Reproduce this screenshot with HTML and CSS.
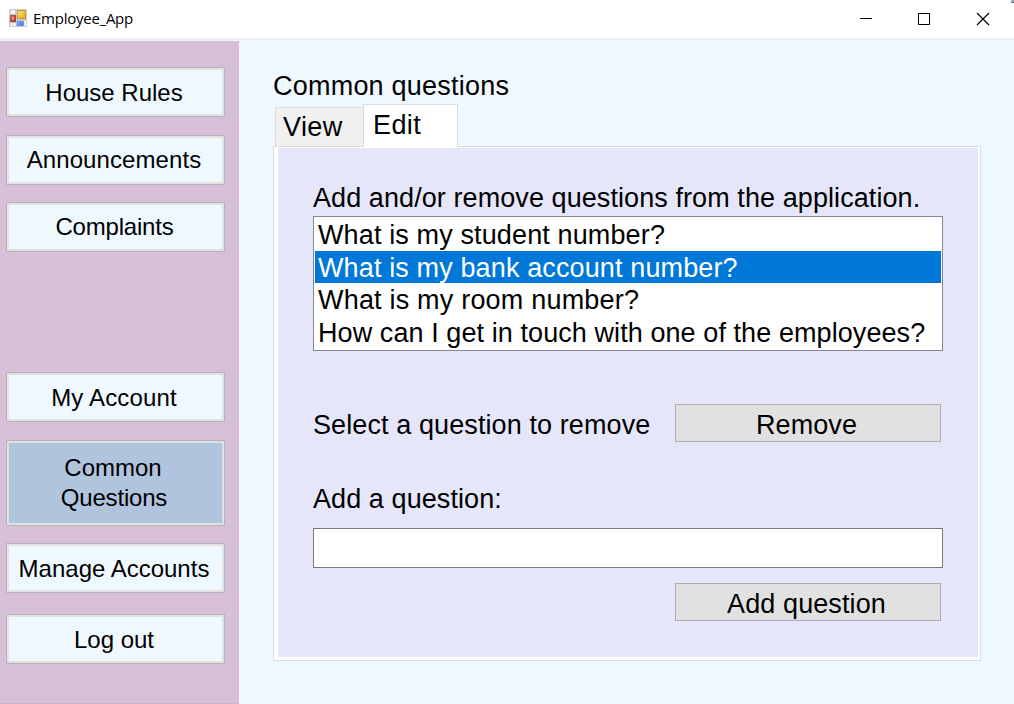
FILE: index.html
```html
<!DOCTYPE html>
<html lang="en">
<head>
<meta charset="utf-8">
<title>Employee_App</title>
<link rel="stylesheet" href="styles.css">
</head>
<body>
<div class="window">
  <header class="titlebar">
    <svg class="app-icon" width="18" height="18" viewBox="0 0 18 18">
      <defs>
        <linearGradient id="gold" x1="0" y1="0" x2="1" y2="1"><stop offset="0" stop-color="#ffe680"/><stop offset="1" stop-color="#e5a800"/></linearGradient>
        <linearGradient id="red" x1="0" y1="0" x2="1" y2="1"><stop offset="0" stop-color="#e08070"/><stop offset="1" stop-color="#b02018"/></linearGradient>
        <linearGradient id="blue" x1="0" y1="0" x2="1" y2="1"><stop offset="0" stop-color="#86b4f8"/><stop offset="1" stop-color="#3f78dc"/></linearGradient>
      </defs>
      <rect width="18" height="18" rx="1" fill="#cfcfcf"/>
      <path d="M2 1.500h4v3H2zM2 14h1.500v3H2zM4.500 14h2v3h-2zM15.500 12h1.500v5h-1.500z" fill="#fff"/>
      <rect x="1.300" y="6.300" width="5.400" height="6.400" fill="url(#red)" stroke="#a8342a" stroke-width=".7"/>
      <rect x="3" y="8" width="2" height="3" fill="#e6968a"/>
      <rect x="8.400" y="1.400" width="8.200" height="8.200" fill="url(#gold)" stroke="#b98a20" stroke-width=".8"/>
      <rect x="8" y="12" width="6.500" height="4.800" fill="url(#blue)" stroke="#5a87d8" stroke-width=".5"/>
    </svg>
    <span class="title">Employee_App</span>
    <svg class="controls" width="132" height="14" viewBox="0 0 132 14" fill="none" stroke="#000">
      <path d="M0 6.500h12"/>
      <path d="M58.500 1.500h11v11h-11z"/>
      <path d="M117 1l12 12M129 1l-12 12" stroke-width="1.150"/>
    </svg>
    <span class="edge"></span>
  </header>
  <div class="body">
    <nav class="sidebar">
      <button class="nav">House Rules</button>
      <button class="nav announcements">Announcements</button>
      <button class="nav complaints">Complaints</button>
      <button class="nav account">My Account</button>
      <button class="nav current">Common<br><span class="second">Questions</span></button>
      <button class="nav manage">Manage Accounts</button>
      <button class="nav logout">Log out</button>
    </nav>
    <main class="content">
      <h1 class="heading">Common questions</h1>
      <div class="tabs">
        <div class="tab">View</div>
        <div class="tab selected">Edit</div>
      </div>
      <section class="page">
        <p class="label intro">Add and/or remove questions from the application.</p>
        <ul class="list">
          <li class="item q1">What is my student number?</li>
          <li class="item q2 active">What is my bank account number?</li>
          <li class="item q3">What is my room number?</li>
          <li class="item q4">How can I get in touch with one of the employees?</li>
        </ul>
        <div class="row">
          <span class="label remove-label">Select a question to remove</span>
          <button class="action remove">Remove</button>
        </div>
        <label class="label add-label" for="question">Add a question:</label>
        <input class="field" id="question" type="text">
        <button class="action add">Add question</button>
      </section>
    </main>
  </div>
</div>
</body>
</html>
```
FILE: styles.css
```css
* { box-sizing: border-box; }
body { margin: 0; font-family: "Liberation Sans", Arial, sans-serif; color: #000; }
button { font-family: inherit; color: inherit; border-radius: 0; padding: 0; }
.window { width: 1014px; height: 704px; display: flex; flex-direction: column; background: #f0f8ff; overflow: hidden; }
.titlebar { height: 40px; flex: none; display: flex; align-items: flex-start; background: #fff; border-bottom: 2px solid #f0f0f0; padding-left: 9px; }
.app-icon { margin-top: 9px; }
.title { font: 15px/20px "Open Sans", "Noto Sans", sans-serif; margin: 8px 0 0 6px; letter-spacing: -0.25px; }
.controls { margin: 12px 0 0 auto; }
.edge { width: 3px; height: 3px; margin-left: 19px; background: #a4a9ba; border-bottom: 1px solid #62687e; }
.body { display: flex; flex: 1; min-height: 0; padding-top: 1px; }
.sidebar { width: 239px; background: #d8bfd8; padding: 26px 14px 0 6px; display: flex; flex-direction: column; border-bottom: 1px solid #cbb4cf; }
.nav { height: 50px; flex: none; background: #f0f8ff; border: 1px solid #b5b3b5; box-shadow: inset 0 0 0 2px #e1e1e1; font-size: 24px; line-height: 30px; margin: 0 0 17.5px; padding: 1px 3px 0 0; }
.announcements, .complaints { padding-top: 0; }
.announcements { letter-spacing: .08px; }
.complaints { margin-bottom: 120px; padding-right: 2px; letter-spacing: -.2px; }
.account { letter-spacing: .15px; }
.current { height: 86px; background: #b0c4de; padding: 0 5px 0 0; }
.second { letter-spacing: -.2px; padding-left: 2px; }
.manage { margin-bottom: 21px; }
.content { padding: 30px 33px 0 34px; flex: 1; display: flex; flex-direction: column; }
.heading { font-size: 27px; line-height: 30px; font-weight: 400; margin: 0; letter-spacing: .22px; }
.tabs { display: flex; align-items: flex-end; height: 43px; padding-left: 2px; margin-top: 3px; position: relative; z-index: 1; }
.tab { font-size: 27px; line-height: 30px; letter-spacing: .4px; width: 88px; height: 40px; background: #f0f0f0; border: 1px solid #dcdcdc; border-right: 0; padding: 4px 0 0 7px; }
.selected { width: 95px; height: 43px; background: #fff; border-right: 1px solid #dcdcdc; border-bottom: 0; padding: 5px 0 0 9px; }
.page { height: 515px; width: 708px; margin-top: -1px; background: #e6e6fa; border: 1px solid #dcdcdc; box-shadow: inset 4px 1px #fff, inset -2px -3px #fff; padding: 36px 36px 0 39px; display: flex; flex-direction: column; }
.label { font-size: 27px; line-height: 30px; letter-spacing: .08px; margin: 0; white-space: nowrap; }
.list { list-style: none; margin: 3px 0 0; width: 630px; height: 135px; background: #fff; border: 1px solid #828790; padding: 1px; flex: none; }
.item { font-size: 27px; line-height: 35px; height: 32.5px; letter-spacing: .13px; padding-left: 3px; white-space: nowrap; }
.q3 { letter-spacing: .2px; }
.q4 { letter-spacing: .08px; }
.active { background: #0078d7; color: #fff; }
.row { display: flex; justify-content: space-between; align-items: center; height: 38px; width: 628px; margin-top: 53px; }
.remove-label { padding-top: 3px; letter-spacing: .1px; }
.action { width: 266px; height: 38px; background: #e1e1e1; border: 1px solid #adadad; font-size: 27px; line-height: 30px; letter-spacing: .1px; padding: 3px 3px 0 0; }
.add-label { margin-top: 42px; }
.field { width: 630px; height: 40px; background: #fff; border: 1px solid #7a7a7a; margin-top: 14px; font: inherit; font-size: 27px; padding: 0 4px; flex: none; }
.add { margin: 15px 0 0 362px; flex: none; }
```
